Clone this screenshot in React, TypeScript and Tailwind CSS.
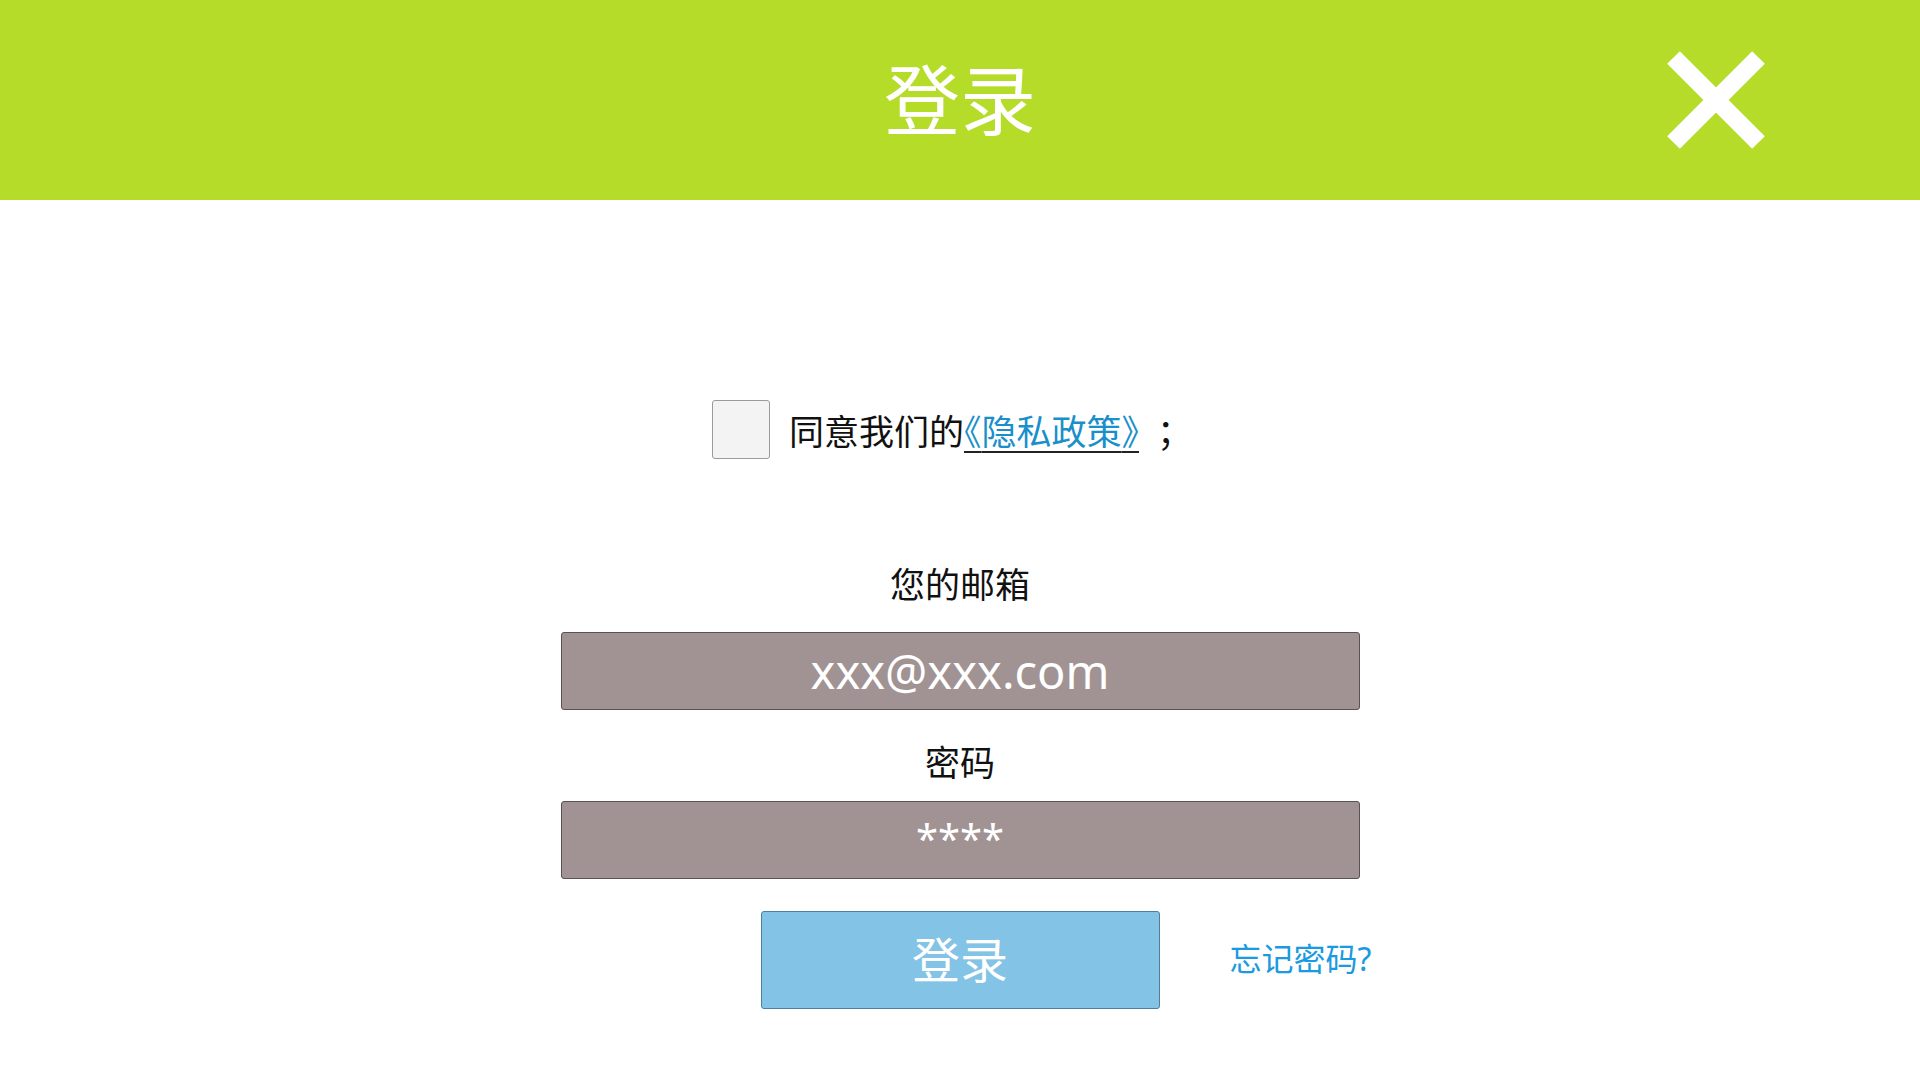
import { useState } from 'react'

const font = { fontFamily: '"Noto Sans", "Noto Sans CJK SC", sans-serif' }
const cjk = { fontFamily: '"Noto Sans CJK SC", "Noto Sans", sans-serif' }

export default function App() {
  const [agree, setAgree] = useState(false)

  return (
    <div className="w-[1920px] h-[1080px] bg-white flex flex-col" style={font}>
      {/* header */}
      <div className="h-[200px] bg-[#b5dc28] grid grid-cols-[1fr_auto_1fr] items-center shrink-0">
        <div />
        <h1 className="text-white text-[76px] leading-none font-normal">登录</h1>
        <div className="flex justify-end pr-[155px]">
          <button className="w-[98px] h-[98px]">
            <svg viewBox="0 0 98 98" className="w-full h-full">
              <path d="M6.5 6.5 L91.5 91.5 M91.5 6.5 L6.5 91.5" stroke="#fff" strokeWidth="18" strokeLinecap="butt" />
            </svg>
          </button>
        </div>
      </div>

      {/* agree row */}
      <div className="mt-[200px] h-[59px] flex justify-center">
        <div className="flex items-center gap-[19px] pr-[16px]">
          <button
            onClick={() => setAgree(!agree)}
            className="w-[58px] h-[59px] rounded-[3px] border border-[#9a9a9a] bg-[#f3f3f3] flex items-center justify-center"
          >
            {agree && <span className="text-[36px] text-[#333]">✓</span>}
          </button>
          <p className="text-[35px] text-[#111] leading-none whitespace-nowrap [text-spacing-trim:space-all]" style={cjk}>
            同意我们的
            <a className="text-[#1a8fc9] underline decoration-[#222] decoration-2 underline-offset-[6px] [font-feature-settings:'halt']">
              《<span className="[font-feature-settings:normal]">隐私政策</span>》
            </a>
            <span className="ml-[18px]">；</span>
          </p>
        </div>
      </div>

      {/* email */}
      <div className="mt-[102px] h-[48px] flex items-center justify-center text-[35px] text-[#111]">您的邮箱</div>
      <div className="mt-[23px] flex justify-center">
        <div className="w-[799px] h-[78px] bg-[#a19393] border border-[#5a5252] rounded-[3px] flex items-center justify-center text-white text-[47px] leading-none">
          xxx@xxx.com
        </div>
      </div>

      {/* password */}
      <div className="mt-[29px] h-[48px] flex items-center justify-center text-[35px] text-[#111]">密码</div>
      <div className="mt-[14px] flex justify-center">
        <div className="w-[799px] h-[78px] bg-[#a19393] border border-[#5a5252] rounded-[3px] flex items-start justify-center pt-[16px] text-white text-[40px] leading-none">
          ****
        </div>
      </div>

      {/* buttons */}
      <div className="mt-[32px] grid grid-cols-[1fr_399px_1fr] items-center">
        <div />
        <button className="h-[98px] bg-[#83c3e5] border border-[#4f7f9b] rounded-[3px] text-white text-[48px] leading-none">
          登录
        </button>
        <div className="pl-[70px]">
          <a className="text-[#1a9ae0] text-[32px] leading-none">忘记密码?</a>
        </div>
      </div>
    </div>
  )
}
